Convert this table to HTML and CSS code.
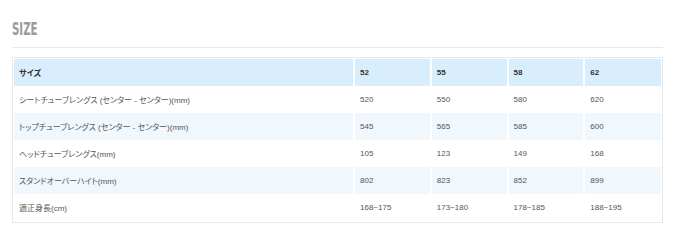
FILE: index.html
```html
<!DOCTYPE html>
<html lang="ja">
<head>
<meta charset="utf-8">
<link rel="stylesheet" href="styles.css">
</head>
<body>
<section class="page">
  <h2 class="title">SIZE</h2>
  <div class="rule"></div>
  <div class="table-box">
    <table class="size-table">
      <colgroup>
        <col class="c-label"><col class="c-num"><col class="c-num"><col class="c-num"><col class="c-num">
      </colgroup>
      <thead>
        <tr><th>サイズ</th><th>52</th><th>55</th><th>58</th><th>62</th></tr>
      </thead>
      <tbody>
        <tr><td>シートチューブレングス (センター - センター)(mm)</td><td>520</td><td>550</td><td>580</td><td>620</td></tr>
        <tr class="alt"><td>トップチューブレングス (センター - センター)(mm)</td><td>545</td><td>565</td><td>585</td><td>600</td></tr>
        <tr><td>ヘッドチューブレングス(mm)</td><td>105</td><td>123</td><td>149</td><td>168</td></tr>
        <tr class="alt"><td>スタンドオーバーハイト(mm)</td><td>802</td><td>823</td><td>852</td><td>899</td></tr>
        <tr><td>適正身長(cm)</td><td>168~175</td><td>173~180</td><td>178~185</td><td>188~195</td></tr>
      </tbody>
    </table>
  </div>
</section>
</body>
</html>
```

FILE: styles.css
```css
html, body {
  margin: 0;
  padding: 0;
  background: #ffffff;
}

.page {
  padding: 19px 12px 0 12px;
}

.title {
  margin: 0;
  font-family: "Liberation Sans Narrow", "DejaVu Sans Condensed", "Liberation Sans", sans-serif;
  font-weight: bold;
  font-size: 18px;
  line-height: 20px;
  color: #9b9b9b;
  transform: scaleX(0.63);
  transform-origin: left center;
  letter-spacing: 0;
}

.rule {
  margin-top: 8px;
  border-top: 1px solid #e8e8e8;
}

.table-box {
  margin-top: 9px;
  border: 1px solid #e8e8e8;
  padding: 1px;
}

.size-table {
  width: 100%;
  border-collapse: collapse;
  table-layout: fixed;
  font-family: "Liberation Sans", "Noto Sans CJK JP", sans-serif;
  font-size: 8px;
  font-feature-settings: "palt";
}

.c-label { width: 340px; }

.size-table th,
.size-table td {
  height: 27px;
  box-sizing: border-box;
  padding: 0 4px 0 5px;
  text-align: left;
  vertical-align: middle;
  border-right: 2px solid #ffffff;
  white-space: nowrap;
}

.size-table th:last-child,
.size-table td:last-child {
  border-right: 0;
}

.size-table th {
  background: #d9eefd;
  color: #333333;
  font-weight: bold;
}

.size-table td {
  color: #555555;
  background: #ffffff;
}

.size-table tr.alt td {
  background: #f0f7fd;
}
```
